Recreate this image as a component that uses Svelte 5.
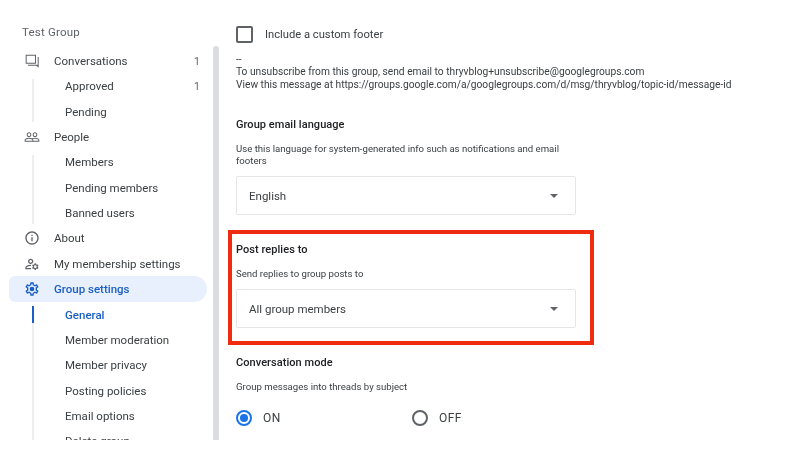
<script>
  const icons = {
    forum: 'M2.5 2.5H18V16H2.5zM4 4v10.5h12.5V4zM6 17.5h14.5V6H22v16l-3.5-3H6z',
    people: 'M16.5 13c-1.2 0-3.07.34-4.5 1-1.43-.67-3.3-1-4.5-1C5.33 13 1 14.08 1 16.25V19h22v-2.75c0-2.17-4.33-3.25-6.5-3.25zm-4 4.5h-10v-1.25c0-.54 2.56-1.75 5-1.75s5 1.21 5 1.75v1.25zm9 0H14v-1.25c0-.46-.2-.86-.52-1.22.88-.3 1.96-.53 3.02-.53 2.44 0 5 1.21 5 1.75v1.25zM7.5 12c1.93 0 3.5-1.57 3.5-3.5S9.43 5 7.5 5 4 6.57 4 8.5 5.57 12 7.5 12zm0-5.5c1.1 0 2 .9 2 2s-.9 2-2 2-2-.9-2-2 .9-2 2-2zm9 5.5c1.93 0 3.5-1.57 3.5-3.5S18.43 5 16.5 5 13 6.57 13 8.5s1.57 3.5 3.5 3.5zm0-5.5c1.1 0 2 .9 2 2s-.9 2-2 2-2-.9-2-2 .9-2 2-2z',
    info: 'M11 7h2v2h-2zm0 4h2v6h-2zm1-9C6.48 2 2 6.48 2 12s4.48 10 10 10 10-4.48 10-10S17.52 2 12 2zm0 18c-4.41 0-8-3.59-8-8s3.59-8 8-8 8 3.59 8 8-3.59 8-8 8z',
    account: 'M4 18v-.65c0-.34.16-.66.41-.81C6.1 15.53 8.03 15 10 15c.03 0 .05 0 .08.01.1-.7.3-1.37.59-1.98-.22-.02-.44-.03-.67-.03-2.42 0-4.68.67-6.61 1.82-.88.52-1.39 1.5-1.39 2.53V20h9.26c-.42-.6-.75-1.28-.97-2H4zM10 12c2.21 0 4-1.79 4-4s-1.79-4-4-4-4 1.79-4 4 1.79 4 4 4zm0-6c1.1 0 2 .9 2 2s-.9 2-2 2-2-.9-2-2 .9-2 2-2zM20.75 16c0-.22-.03-.42-.06-.63l1.14-1.01-1-1.73-1.45.49c-.32-.27-.68-.48-1.08-.63L18 11h-2l-.3 1.49c-.4.15-.76.36-1.08.63l-1.45-.49-1 1.73 1.14 1.01c-.03.21-.06.41-.06.63s.03.42.06.63l-1.14 1.01 1 1.73 1.45-.49c.32.27.68.48 1.08.63L16 21h2l.3-1.49c.4-.15.76-.36 1.08-.63l1.45.49 1-1.73-1.14-1.01c.03-.21.06-.41.06-.63zM17 18c-1.1 0-2-.9-2-2s.9-2 2-2 2 .9 2 2-.9 2-2 2z',
    settings: 'M19.43 12.98c.04-.32.07-.64.07-.98 0-.34-.03-.66-.07-.98l2.11-1.65c.19-.15.24-.42.12-.64l-2-3.46c-.09-.16-.26-.25-.44-.25-.06 0-.12.01-.17.03l-2.49 1c-.52-.4-1.08-.73-1.69-.98l-.38-2.65C14.46 2.18 14.25 2 14 2h-4c-.25 0-.46.18-.49.42l-.38 2.65c-.61.25-1.17.59-1.69.98l-2.49-1c-.06-.02-.12-.03-.18-.03-.17 0-.34.09-.43.25l-2 3.46c-.13.22-.07.49.12.64l2.11 1.65c-.04.32-.07.65-.07.98 0 .33.03.66.07.98l-2.11 1.65c-.19.15-.24.42-.12.64l2 3.46c.09.16.26.25.44.25.06 0 .12-.01.17-.03l2.49-1c.52.4 1.08.73 1.69.98l.38 2.65c.03.24.24.42.49.42h4c.25 0 .46-.18.49-.42l.38-2.65c.61-.25 1.17-.59 1.69-.98l2.49 1c.06.02.12.03.18.03.17 0 .34-.09.43-.25l2-3.46c.12-.22.07-.49-.12-.64l-2.11-1.65zm-1.98-1.71c.04.31.05.52.05.73 0 .21-.02.43-.05.73l-.14 1.13.89.7 1.08.84-.7 1.21-1.27-.51-1.04-.42-.9.68c-.43.32-.84.56-1.25.73l-1.06.43-.16 1.13-.2 1.35h-1.4l-.19-1.35-.16-1.13-1.06-.43c-.43-.18-.83-.41-1.23-.71l-.91-.7-1.06.43-1.27.51-.7-1.21 1.08-.84.89-.7-.14-1.13c-.03-.31-.05-.54-.05-.74s.02-.43.05-.73l.14-1.13-.89-.7-1.08-.84.7-1.21 1.27.51 1.04.42.9-.68c.43-.32.84-.56 1.25-.73l1.06-.43.16-1.13.2-1.35h1.39l.19 1.35.16 1.13 1.06.43c.43.18.83.41 1.23.71l.91.7 1.06-.43 1.27-.51.7 1.21-1.07.85-.89.7.14 1.13zM12 8.5a3.5 3.5 0 1 0 0 7 3.5 3.5 0 0 0 0-7z'
  };

  const nav = [
    { label: 'Conversations', icon: 'forum', count: 1, items: [{ label: 'Approved', count: 1 }, { label: 'Pending' }] },
    { label: 'People', icon: 'people', items: [{ label: 'Members' }, { label: 'Pending members' }, { label: 'Banned users' }] },
    { label: 'About', icon: 'info' },
    { label: 'My membership settings', icon: 'account' },
    {
      label: 'Group settings',
      icon: 'settings',
      active: true,
      items: [
        { label: 'General', active: true },
        { label: 'Member moderation' },
        { label: 'Member privacy' },
        { label: 'Posting policies' },
        { label: 'Email options' },
        { label: 'Delete group' }
      ]
    }
  ];
</script>

<div class="page">
  <aside class="sidebar">
    <div class="group-name">Test Group</div>
    <nav>
      {#each nav as entry}
        <div class="row" class:active={entry.active}>
          <svg class="icon" viewBox="0 0 24 24"><path d={icons[entry.icon]} /></svg>
          <span class="label">{entry.label}</span>
          {#if entry.count}<span class="count">{entry.count}</span>{/if}
        </div>
        {#if entry.items}
          <div class="sub">
            {#each entry.items as item}
              <div class="sub-row" class:active={item.active}>
                <span>{item.label}</span>
                {#if item.count}<span class="count">{item.count}</span>{/if}
              </div>
            {/each}
          </div>
        {/if}
      {/each}
    </nav>
  </aside>
  <div class="scrollbar"></div>

  <main>
    <div class="check-row">
      <span class="checkbox"></span>
      <span>Include a custom footer</span>
    </div>

    <div class="footer-text">
      <div>--</div>
      <div>To unsubscribe from this group, send email to thryvblog+unsubscribe@googlegroups.com</div>
      <div>View this message at https://groups.google.com/a/googlegroups.com/d/msg/thryvblog/topic-id/message-id</div>
    </div>

    <h3 class="language-title">Group email language</h3>
    <p class="desc">Use this language for system-generated info such as notifications and email footers</p>
    <div class="select"><span>English</span><span class="caret"></span></div>

    <section class="highlight">
      <h3>Post replies to</h3>
      <p class="desc">Send replies to group posts to</p>
      <div class="select"><span>All group members</span><span class="caret"></span></div>
    </section>

    <h3>Conversation mode</h3>
    <p class="desc">Group messages into threads by subject</p>
    <div class="radios">
      <div class="radio-item"><span class="radio on"></span><span>ON</span></div>
      <div class="radio-item"><span class="radio"></span><span>OFF</span></div>
    </div>
  </main>
</div>

<style>
  :global(body) {
    background: #fff;
  }

  .page {
    display: flex;
    width: 808px;
    height: 440px;
    overflow: hidden;
    font-family: Roboto, "Liberation Sans", sans-serif;
    color: #3c4043;
    filter: blur(0.45px);
  }

  .sidebar {
    width: 213px;
    flex: none;
    padding-top: 25px;
    box-sizing: border-box;
  }

  .group-name {
    margin-left: 22px;
    height: 14px;
    line-height: 14px;
    font-size: 11.5px;
    letter-spacing: 0.2px;
    color: #5f6368;
    margin-bottom: 9.4px;
  }

  .row {
    display: flex;
    align-items: center;
    height: 25.35px;
    margin-left: 9px;
    width: 198px;
    padding-left: 14.5px;
    box-sizing: border-box;
    font-size: 11.5px;
  }

  .row.active {
    background: #e8f0fe;
    border-radius: 6px 13px 13px 6px;
    color: #1a5fc4;
    font-weight: 500;
  }

  .icon {
    width: 16px;
    height: 16px;
    flex: none;
    margin-right: 14.5px;
    fill: #5f6368;
  }

  .row.active .icon {
    fill: #1a5fc4;
  }

  .label {
    flex: 1;
  }

  .count {
    font-size: 10.5px;
    color: #5f6368;
    margin-right: 7px;
  }

  .sub {
    position: relative;
    margin-left: 32px;
    width: 175px;
    padding-left: 33px;
    box-sizing: border-box;
  }

  .sub::before {
    content: "";
    position: absolute;
    left: 0;
    top: 5px;
    bottom: 2px;
    width: 2px;
    background: #eceef0;
  }

  .sub-row {
    display: flex;
    align-items: center;
    justify-content: space-between;
    height: 25.35px;
    font-size: 11.5px;
  }

  .sub-row.active {
    color: #1a5fc4;
    font-weight: 500;
  }

  .sub-row.active::before {
    content: "";
    position: absolute;
    left: 0;
    top: 4px;
    width: 2px;
    height: 17px;
    background: #1a5fc4;
  }

  .scrollbar {
    width: 6px;
    flex: none;
    margin-top: 46px;
    background: #dadce0;
    border-radius: 3px 3px 0 0;
  }

  main {
    flex: 1;
    padding: 26px 0 0 17px;
    font-size: 11.2px;
  }

  .check-row {
    display: flex;
    align-items: center;
    gap: 12px;
    height: 17px;
  }

  .checkbox {
    width: 13px;
    height: 13px;
    border: 2px solid #5f6368;
    border-radius: 2px;
  }

  .footer-text {
    margin-top: 11px;
    font-size: 10.22px;
    line-height: 12.4px;
  }

  h3 {
    margin: 0;
    font-size: 11px;
    font-weight: 500;
    line-height: 14px;
    color: #202124;
    letter-spacing: 0.05px;
  }

  .language-title {
    margin-top: 27px;
  }

  .desc {
    margin: 11px 0 0;
    width: 340px;
    font-size: 9.6px;
    line-height: 12px;
    color: #3c4043;
  }

  .select {
    display: flex;
    align-items: center;
    justify-content: space-between;
    width: 340px;
    height: 39px;
    margin-top: 9px;
    padding: 0 17px 0 12px;
    box-sizing: border-box;
    border: 1px solid #e4e6e8;
    border-radius: 2px;
    font-size: 11.5px;
  }

  .caret {
    width: 0;
    height: 0;
    border-left: 4.5px solid transparent;
    border-right: 4.5px solid transparent;
    border-top: 4.5px solid #5f6368;
  }

  .highlight {
    width: 366px;
    height: 115px;
    box-sizing: border-box;
    margin: 15px 0 11px -8px;
    padding: 9px 0 0 4px;
    border: 4px solid #f02c10;
  }

  .radios {
    display: flex;
    margin-top: 17px;
  }

  .radio-item {
    display: flex;
    align-items: center;
    gap: 11px;
    width: 176px;
    height: 16px;
    font-size: 12px;
    letter-spacing: 0.4px;
  }

  .radio {
    width: 12px;
    height: 12px;
    border: 2px solid #5f6368;
    border-radius: 50%;
    position: relative;
  }

  .radio.on {
    border-color: #1a73e8;
  }

  .radio.on::after {
    content: "";
    position: absolute;
    inset: 2px;
    border-radius: 50%;
    background: #1a73e8;
  }
</style>
